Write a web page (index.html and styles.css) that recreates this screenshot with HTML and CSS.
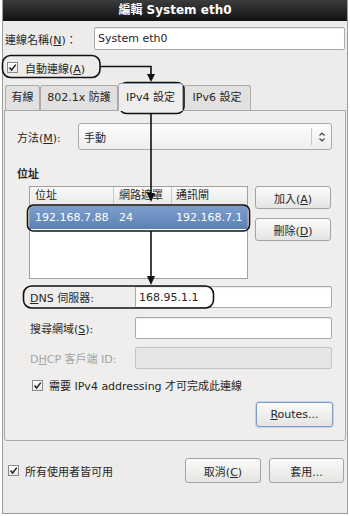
FILE: index.html
```html
<!DOCTYPE html>
<html lang="zh-Hant">
<head>
  <meta charset="UTF-8" />
  <title>編輯 System eth0</title>
  <link rel="stylesheet" href="styles.css">
</head>
<body>
  <div class="window">
    <div class="titlebar">編輯 System eth0</div>

    <div class="name-row">
      <span class="name-label">連線名稱(<u>N</u>)：</span>
      <div class="field">System eth0</div>
    </div>

    <div class="check-row auto">
      <span class="check"><svg viewBox="0 0 11 11" width="11" height="11"><path d="M2.5 5.5 L4.6 8 L8.8 2.6" fill="none" stroke="#222" stroke-width="1.5"/></svg></span>
      <span>自動連線(<u>A</u>)</span>
    </div>

    <div class="tabs">
      <div class="tab t1">有線</div>
      <div class="tab t2">802.1x 防護</div>
      <div class="tab t3 active">IPv4 設定</div>
      <div class="tab t4">IPv6 設定</div>
    </div>

    <div class="panel">
      <div class="method-row">
        <span class="method-label">方法(<u>M</u>):</span>
        <div class="combo">
          <span class="combo-text">手動</span>
          <span class="combo-arrow"><svg viewBox="0 0 8 12" width="8" height="12"><path d="M1.5 4.5 L4 2 L6.5 4.5 M1.5 7.5 L4 10 L6.5 7.5" fill="none" stroke="#444" stroke-width="1.2"/></svg></span>
        </div>
      </div>

      <div class="section-title">位址</div>

      <div class="addr-row">
        <div class="list">
          <div class="list-head">
            <span class="col c1">位址</span>
            <span class="col c2">網路遮罩</span>
            <span class="col c3">通訊閘</span>
          </div>
          <div class="list-item selected">
            <span class="col c1">192.168.7.88</span>
            <span class="col c2">24</span>
            <span class="col c3">192.168.7.1</span>
          </div>
        </div>
        <div class="side-buttons">
          <button class="btn">加入(<u>A</u>)</button>
          <button class="btn">刪除(<u>D</u>)</button>
        </div>
      </div>

      <div class="form-row dns">
        <span class="form-label"><u>D</u>NS 伺服器:</span>
        <div class="field">168.95.1.1</div>
      </div>
      <div class="form-row search">
        <span class="form-label">搜尋網域(<u>S</u>):</span>
        <div class="field"></div>
      </div>
      <div class="form-row dhcp">
        <span class="form-label disabled">D<u>H</u>CP 客戶端 ID:</span>
        <div class="field off"></div>
      </div>

      <div class="check-row require">
        <span class="check"><svg viewBox="0 0 11 11" width="11" height="11"><path d="M2.5 5.5 L4.6 8 L8.8 2.6" fill="none" stroke="#222" stroke-width="1.5"/></svg></span>
        <span>需要 IPv4 addressing 才可完成此連線</span>
      </div>

      <div class="routes-row">
        <button class="btn focus"><u>R</u>outes...</button>
      </div>
    </div>

    <div class="bottom-row">
      <span class="check"><svg viewBox="0 0 11 11" width="11" height="11"><path d="M2.5 5.5 L4.6 8 L8.8 2.6" fill="none" stroke="#222" stroke-width="1.5"/></svg></span>
      <span class="all-users">所有使用者皆可用</span>
      <button class="btn cancel">取消(<u>C</u>)</button>
      <button class="btn apply">套用...</button>
    </div>
  </div>

  <!-- callouts drawn over the dialog -->
  <svg class="notes" viewBox="0 0 350 516" width="350" height="516">
    <g fill="none" stroke="#111" stroke-width="1.6">
      <rect x="2.5" y="55.5" width="97.5" height="22" rx="8"/>
      <rect x="119.5" y="82.5" width="64.5" height="31" rx="7"/>
      <rect x="27.5" y="205" width="222" height="26" rx="6"/>
      <rect x="23.5" y="286" width="190" height="22" rx="8"/>
      <path d="M100 66.5 H151 V76"/>
      <path d="M151 114 V194"/>
      <path d="M151 231 V277"/>
    </g>
    <g fill="#111">
      <path d="M147 74 L155 74 L151 82 Z"/>
      <path d="M147 193 L155 193 L151 202 Z"/>
      <path d="M147 276 L155 276 L151 285 Z"/>
    </g>
  </svg>
</body>
</html>
```

FILE: styles.css
```css
* {
  box-sizing: border-box;
  margin: 0;
  padding: 0;
}
body {
  position: relative;
  width: 350px;
  height: 516px;
  background: #fff;
  font-family: "DejaVu Sans", "Noto Sans CJK TC", sans-serif;
  font-size: 11px;
  color: #262626;
  overflow: hidden;
}
u {
  text-decoration: underline;
  text-underline-offset: 1px;
}
.window {
  margin-left: 2px;
  width: 346px;
  height: 514px;
  background: #edecea;
  border: 1px solid #9c9c9c;
  border-top: none;
}
.titlebar {
  height: 21px;
  line-height: 21px;
  text-align: center;
  color: #fff;
  font-weight: bold;
  font-size: 12px;
  background: linear-gradient(#3c3c3c, #121212);
}
.name-row {
  display: flex;
  align-items: center;
  height: 23px;
  margin: 6px 2px 0 2px;
}
.name-label {
  width: 89px;
}
.field {
  flex: 1;
  height: 23px;
  line-height: 21px;
  padding-left: 3px;
  background: #fff;
  border: 1px solid #a9a9a9;
  border-radius: 2px;
  box-shadow: inset 0 1px 1px rgba(0, 0, 0, 0.08);
}
.field.off {
  background: #e7e6e4;
  border-color: #c4c4c4;
  box-shadow: none;
}
.check-row {
  display: flex;
  align-items: center;
}
.check {
  display: flex;
  width: 11px;
  height: 11px;
  border: 1px solid #8a8a8a;
  background: linear-gradient(#fff, #e8e8e8);
}
.check svg {
  margin: -1px;
}
.auto {
  height: 19px;
  margin-top: 8px;
  padding-left: 4px;
  gap: 7px;
}
.tabs {
  display: flex;
  align-items: flex-end;
  height: 27px;
  margin: 6px 0 0 2px;
}
.tab {
  height: 25px;
  line-height: 24px;
  text-align: center;
  background: #e2e1df;
  border: 1px solid #aaa;
  border-bottom: none;
  border-radius: 3px 3px 0 0;
}
.t1 { width: 35px; }
.t2 { width: 78px; }
.t3 { width: 65px; }
.t4 { width: 68px; }
.tab.active {
  position: relative;
  z-index: 1;
  height: 28px;
  line-height: 27px;
  margin-bottom: -1px;
  background: #efeeec;
  border-top-color: #7c9cc8;
}
.panel {
  height: 331px;
  margin: 0 1px;
  background: #efeeec;
  border: 1px solid #a9a9a9;
  border-radius: 0 0 3px 3px;
}
.method-row {
  display: flex;
  align-items: center;
  height: 27px;
  margin: 12px 13px 0 12px;
}
.method-label {
  width: 61px;
}
.combo {
  flex: 1;
  display: flex;
  align-items: center;
  height: 27px;
  background: linear-gradient(#fdfdfd, #eeeeee);
  border: 1px solid #a9a9a9;
  border-radius: 3px;
}
.combo-text {
  flex: 1;
  padding-left: 5px;
}
.combo-arrow {
  display: flex;
  align-items: center;
  justify-content: center;
  width: 20px;
  height: 17px;
  border-left: 1px solid #c8c8c8;
}
.section-title {
  margin: 18px 0 0 12px;
  line-height: 14px;
  font-weight: bold;
}
.addr-row {
  display: flex;
  gap: 7px;
  margin-top: 4px;
  padding-left: 24px;
}
.list {
  width: 219px;
  height: 93px;
  background: #fff;
  border: 1px solid #a0a0a0;
}
.list-head {
  display: flex;
  height: 19px;
  line-height: 18px;
  background: linear-gradient(#fafafa, #e9e9e9);
  border-bottom: 1px solid #d0d0d0;
}
.list-head .col {
  border-right: 1px solid #c8c8c8;
}
.list-head .col.c3 {
  border-right: none;
}
.col {
  padding-left: 5px;
  white-space: nowrap;
}
.c1 { width: 84px; }
.c2 { width: 58px; }
.c3 { flex: 1; padding-left: 4px; }
.list-item {
  display: flex;
  height: 23px;
  line-height: 23px;
}
.list-item.selected {
  color: #fff;
  background: linear-gradient(#7d9fcd, #5b80b4);
}
.side-buttons {
  display: flex;
  flex-direction: column;
  gap: 9px;
  width: 76px;
}
.btn {
  height: 23px;
  font: inherit;
  color: #262626;
  background: linear-gradient(#fbfbfb, #e4e4e3);
  border: 1px solid #a3a3a3;
  border-radius: 3px;
}
.form-row {
  display: flex;
  align-items: center;
  height: 22px;
  margin: 0 13px 0 25px;
}
.form-row .field {
  height: 22px;
}
.form-label {
  width: 105px;
}
.form-label.disabled {
  color: #a4a4a4;
}
.dns { margin-top: 7px; }
.search { margin-top: 9px; }
.dhcp { margin-top: 8px; }
.require {
  height: 14px;
  margin-top: 9px;
  padding-left: 27px;
  gap: 6px;
}
.routes-row {
  display: flex;
  justify-content: flex-end;
  margin: 10px 12px 0 0;
}
.routes-row .btn {
  width: 77px;
  height: 25px;
}
.btn.focus {
  border-color: #7d9ccb;
  box-shadow: 0 0 0 1px #c4d4ea;
}
.bottom-row {
  display: flex;
  align-items: center;
  height: 25px;
  margin: 17px 3px 0 5px;
}
.all-users {
  margin-left: 6px;
}
.bottom-row .btn {
  height: 25px;
}
.cancel {
  width: 76px;
  margin-left: auto;
}
.apply {
  width: 75px;
  margin-left: 8px;
}
.notes {
  position: absolute;
  top: 0;
  left: 0;
  pointer-events: none;
}
```
